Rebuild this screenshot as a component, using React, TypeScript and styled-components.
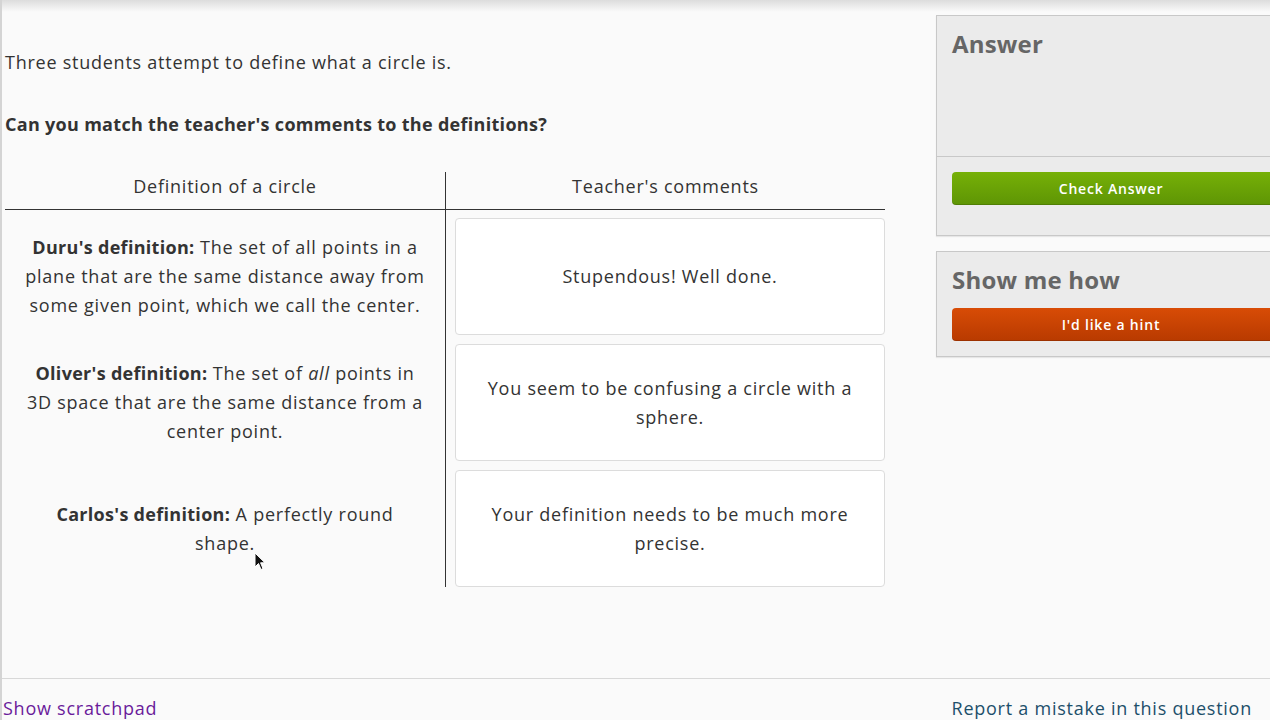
import styled, { createGlobalStyle } from 'styled-components';

const GlobalStyle = createGlobalStyle`
  html, body {
    margin: 0;
    padding: 0;
    background: #fafafa;
  }
  body {
    font-family: "Open Sans", Lato, sans-serif;
    color: #333;
    letter-spacing: 0.75px;
  }
  strong {
    letter-spacing: 0.3px;
  }
`;

interface Definition {
  name: string;
  body: React.ReactNode;
}

const definitions: Definition[] = [
  {
    name: "Duru's definition:",
    body: 'The set of all points in a plane that are the same distance away from some given point, which we call the center.',
  },
  {
    name: "Oliver's definition:",
    body: (
      <>
        The set of <em>all</em> points in 3D space that are the same distance from a center point.
      </>
    ),
  },
  {
    name: "Carlos's definition:",
    body: 'A perfectly round shape.',
  },
];

const comments = [
  'Stupendous! Well done.',
  'You seem to be confusing a circle with a sphere.',
  'Your definition needs to be much more precise.',
];

const App = () => {
  return (
    <>
      <GlobalStyle />
      <Page>
        <TopShade />
        <Main>
          <Question>
            <Intro>Three students attempt to define what a circle is.</Intro>
            <Prompt>Can you match the teacher's comments to the definitions?</Prompt>
            <Table>
              <HeaderCell>Definition of a circle</HeaderCell>
              <HeaderCell $divider>Teacher's comments</HeaderCell>
              <DefColumn>
                {definitions.map((d) => (
                  <DefCell key={d.name}>
                    <p>
                      <strong>{d.name}</strong> {d.body}
                    </p>
                  </DefCell>
                ))}
              </DefColumn>
              <CommentColumn>
                {comments.map((c) => (
                  <CommentCard key={c}>
                    <p>{c}</p>
                  </CommentCard>
                ))}
              </CommentColumn>
            </Table>
            <Cursor viewBox="0 0 12 19" width="12" height="19">
              <path
                d="M1 1 L1 15 L4.5 11.5 L7 17.5 L9 16.6 L6.6 10.8 L11 10.8 Z"
                fill="#111"
                stroke="#fff"
                strokeWidth="1"
                strokeLinejoin="round"
              />
            </Cursor>
          </Question>
          <Sidebar>
            <Panel>
              <PanelTitle $tall>Answer</PanelTitle>
              <PanelFooter>
                <ActionButton $color="green">Check Answer</ActionButton>
              </PanelFooter>
            </Panel>
            <Panel>
              <PanelTitle>Show me how</PanelTitle>
              <PanelBody>
                <ActionButton $color="orange">I'd like a hint</ActionButton>
              </PanelBody>
            </Panel>
          </Sidebar>
        </Main>
        <Footer>
          <FooterLink $tone="purple">Show scratchpad</FooterLink>
          <FooterLink $tone="teal">Report a mistake in this question</FooterLink>
        </Footer>
      </Page>
    </>
  );
};

export default App;

const Page = styled.div`
  position: relative;
  width: 1270px;
  height: 720px;
  overflow: hidden;
  background: #fafafa;
  border-left: 2px solid #d4d4d4;
  box-sizing: border-box;
  display: flex;
  flex-direction: column;
`;

const TopShade = styled.div`
  position: absolute;
  top: 0;
  left: 0;
  right: 0;
  height: 12px;
  background: linear-gradient(#dcdcdc, rgba(250, 250, 250, 0));
  pointer-events: none;
`;

const Main = styled.div`
  flex: 1;
  display: flex;
  gap: 51px;
  padding-top: 15px;
`;

const Question = styled.div`
  position: relative;
  width: 880px;
  padding-left: 3px;
  flex-shrink: 0;
`;

const Intro = styled.p`
  margin: 34px 0 0;
  font-size: 18px;
  line-height: 26px;
`;

const Prompt = styled.p`
  margin: 36px 0 0;
  font-size: 18px;
  line-height: 26px;
  font-weight: 700;
  letter-spacing: 0.3px;
`;

const Table = styled.div`
  margin-top: 35px;
  display: grid;
  grid-template-columns: 440px 440px;
`;

const HeaderCell = styled.div<{ $divider?: boolean }>`
  height: 37px;
  border-bottom: 1px solid #333;
  border-left: ${(p) => (p.$divider ? '1px solid #333' : 'none')};
  text-align: center;
  font-size: 18px;
  line-height: 28px;
`;

const DefColumn = styled.div`
  display: flex;
  flex-direction: column;
  gap: 9px;
  padding: 8px 0 0;
`;

const DefCell = styled.div`
  height: 117px;
  display: flex;
  align-items: center;
  justify-content: center;
  padding: 0 20px;
  text-align: center;
  font-size: 18px;
  line-height: 29px;

  p {
    margin: 0;
  }
`;

const CommentColumn = styled.div`
  display: flex;
  flex-direction: column;
  gap: 9px;
  padding: 8px 0 0 9px;
  border-left: 1px solid #333;
`;

const CommentCard = styled.div`
  height: 117px;
  box-sizing: border-box;
  background: #fff;
  border: 1px solid #dcdcdc;
  border-radius: 4px;
  display: flex;
  align-items: center;
  justify-content: center;
  padding: 0 24px;
  text-align: center;
  font-size: 18px;
  line-height: 29px;

  p {
    margin: 0;
  }
`;

const Cursor = styled.svg`
  position: absolute;
  left: 252px;
  top: 537px;
`;

const Sidebar = styled.div`
  display: flex;
  flex-direction: column;
  gap: 15px;
  flex: 1;
  min-width: 0;
`;

const Panel = styled.div`
  background: #ebebeb;
  border: 1px solid #c8c8c8;
  border-right: none;
  box-shadow: 0 1px 1px rgba(0, 0, 0, 0.08);
`;

const PanelTitle = styled.h2<{ $tall?: boolean }>`
  margin: 0;
  padding: 12px 15px 0;
  height: ${(p) => (p.$tall ? '140px' : 'auto')};
  box-sizing: border-box;
  font-size: 24px;
  line-height: 32px;
  font-weight: 700;
  color: #666;
  letter-spacing: 0.2px;
`;

const PanelFooter = styled.div`
  border-top: 1px solid #c8c8c8;
  padding: 15px 0 30px 15px;
`;

const PanelBody = styled.div`
  padding: 12px 0 15px 15px;
`;

const ActionButton = styled.button<{ $color: 'green' | 'orange' }>`
  display: block;
  width: 100%;
  height: 33px;
  border: none;
  border-radius: 4px 0 0 4px;
  color: #fff;
  font-family: "Open Sans", Lato, sans-serif;
  font-size: 14px;
  font-weight: 600;
  letter-spacing: 0.8px;
  background: ${(p) =>
    p.$color === 'green'
      ? 'linear-gradient(#76b007, #5e9505)'
      : 'linear-gradient(#d84c06, #b83a00)'};
  box-shadow: inset 0 -1px 0 rgba(0, 0, 0, 0.15);
`;

const Footer = styled.div`
  height: 41px;
  border-top: 1px solid #d8d8d8;
  display: flex;
  align-items: flex-end;
  justify-content: space-between;
  padding: 0 18px 0 1px;
`;

const FooterLink = styled.a<{ $tone: 'purple' | 'teal' }>`
  font-size: 18px;
  line-height: 24px;
  color: ${(p) => (p.$tone === 'purple' ? '#6a1b9a' : '#1d4f6a')};
  cursor: pointer;
`;
